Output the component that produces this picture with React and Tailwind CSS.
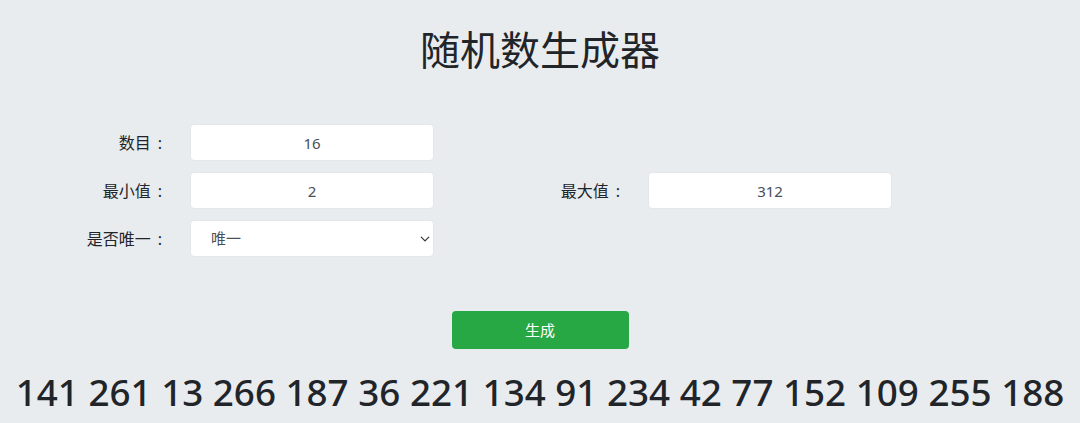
import React, { useState } from 'react';

const font = { fontFamily: '"Noto Sans", "Noto Sans CJK SC", sans-serif' };

const Chevron = () => (
  <svg className="pointer-events-none absolute right-[4px] top-1/2 -translate-y-1/2" width="10" height="10" viewBox="0 0 16 16">
    <path d="M2 5l6 6 6-6" fill="none" stroke="#343a40" strokeWidth="2" strokeLinecap="round" strokeLinejoin="round" />
  </svg>
);

const Label = ({ text, w }) => (
  <label className={`${w} pr-[28px] text-right text-[16px]`}>
    {text}<span className="ml-[7px]">:</span>
  </label>
);

const App = () => {
  const [count, setCount] = useState('16');
  const [min, setMin] = useState('2');
  const [max, setMax] = useState('312');
  const [unique, setUnique] = useState('1');
  const [numbers] = useState([141, 261, 13, 266, 187, 36, 221, 134, 91, 234, 42, 77, 152, 109, 255, 188]);

  const inputCls = 'w-[244px] h-[37px] rounded-[4px] border border-[#e3e6ea] bg-white text-center text-[15px] text-[#495057] outline-none';

  return (
    <div className="min-h-screen w-full bg-[#e9ecef] text-[#212529] flex flex-col items-center" style={font}>
      {/* Title */}
      <h1 className="mt-[26px] h-[48px] leading-[48px] text-[40px] font-normal">随机数生成器</h1>

      {/* Form */}
      <div className="mt-[50px] w-full flex flex-col gap-[11px]">
        <div className="flex items-center h-[37px]">
          <Label text="数目" w="w-[190px]" />
          <input className={inputCls} value={count} onChange={e => setCount(e.target.value)} />
        </div>
        <div className="flex items-center h-[37px]">
          <Label text="最小值" w="w-[190px]" />
          <input className={inputCls} value={min} onChange={e => setMin(e.target.value)} />
          <Label text="最大值" w="w-[214px]" />
          <input className={inputCls} value={max} onChange={e => setMax(e.target.value)} />
        </div>
        <div className="flex items-center h-[37px]">
          <Label text="是否唯一" w="w-[190px]" />
          <div className="relative w-[244px] h-[37px]">
            <select
              className="w-full h-full appearance-none rounded-[4px] border border-[#e3e6ea] bg-white pl-[20px] text-[15px] text-[#495057] outline-none"
              value={unique}
              onChange={e => setUnique(e.target.value)}
            >
              <option value="1">唯一</option>
              <option value="0">不唯一</option>
            </select>
            <Chevron />
          </div>
        </div>
      </div>

      {/* Button */}
      <button className="mt-[54px] w-[177px] h-[38px] rounded-[4px] bg-[#28a745] text-white text-[15px]">生成</button>

      {/* Result */}
      <div className="mt-[21px] text-[36.8px] leading-[44px] font-medium text-[#212529] whitespace-nowrap">
        {numbers.join(' ')}
      </div>
    </div>
  );
};

export default App;
